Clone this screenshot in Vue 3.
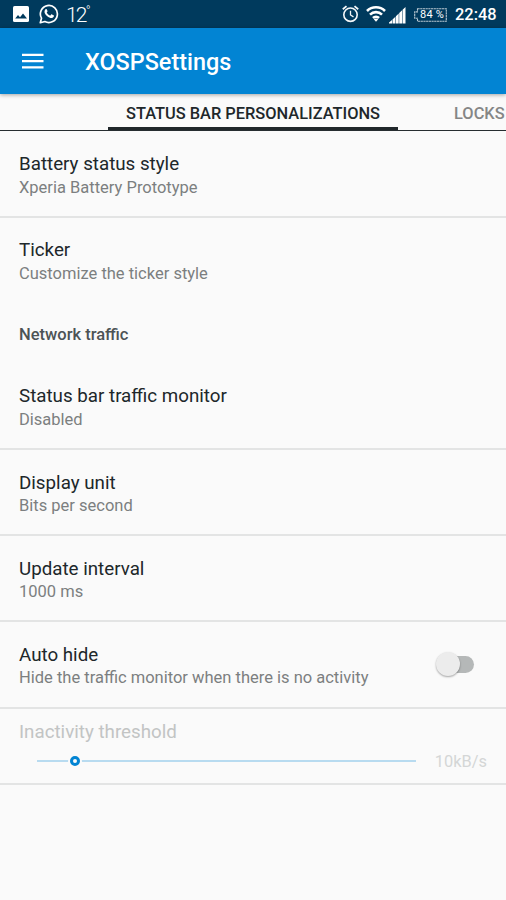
<script setup>
import { ref } from 'vue'

const beforeGroup = [
  { title: 'Battery status style', summary: 'Xperia Battery Prototype', size: 'first' },
  { title: 'Ticker', summary: 'Customize the ticker style', size: 'last' },
]
const group = [
  { title: 'Status bar traffic monitor', summary: 'Disabled', size: 'lead' },
  { title: 'Display unit', summary: 'Bits per second', size: 'regular' },
  { title: 'Update interval', summary: '1000 ms', size: 'regular' },
]
const autoHide = ref(false)
const threshold = ref(10)
</script>

<template>
  <div class="screen">
    <div class="status">
      <svg class="photo" width="16" height="16" viewBox="0 0 16 16">
        <rect width="16" height="16" rx="1.6" fill="#fff" />
        <path d="M2.2 12.5 5 9l2 2.2L10 7.4l4 5.1z" fill="#003a5d" />
      </svg>
      <svg class="chat" width="20" height="20" viewBox="0 0 20 20">
        <path d="M1.3 18.7 2.5 14.2A8.5 8.5 0 1 1 5.9 17.5z" fill="none" stroke="#fff" stroke-width="1.7" stroke-linejoin="round" />
        <path d="M6.2 5.5c.5-.6 1.3-.7 1.6 0l.7 1.6c.2.5-.5 1.1-.8 1.5.8 1.5 1.9 2.5 3.4 3.1l.9-1c.3-.4.6-.4 1-.2l1.6.8c.4.2.4.5.3 1-.4 1.5-2 2-3.4 1.7-3.1-.8-5.7-3.4-6-5.9-.1-1 .2-1.9.7-2.6z" fill="#fff" />
      </svg>
      <span class="temp">12<span class="degree">°</span></span>
      <span class="grow"></span>
      <svg class="alarm" width="17" height="18" viewBox="0 0 17 18" fill="none" stroke="#f4f7f9">
        <circle cx="8.5" cy="9.7" r="6.7" stroke-width="1.6" />
        <path d="M.8 4.2 4.5 1.1M12.5 1.1 16.2 4.2" stroke-width="1.8" />
        <path d="M8.5 5.8V10l3 1.9" stroke-width="1.3" />
      </svg>
      <svg class="wifi" width="20" height="16" viewBox="0 0 20 16" fill="none" stroke="#fff" stroke-width="2.6">
        <path d="M1 5a12.800 12.800 0 0 1 18 0M4 8.600a8.500 8.500 0 0 1 12 0M7 12a4.300 4.300 0 0 1 6 0" />
        <path d="M7.800 13.200Q10 11.700 12.200 13.200L10 15.700z" fill="#fff" stroke="none" />
      </svg>
      <svg class="signal" width="17" height="17" viewBox="0 0 17 17" fill="#fff">
        <path d="M0 16.500V15.600L3 12.900V16.500zM3.500 16.500V12.400L6.400 9.700V16.500zM6.900 16.500V9.200L9.700 6.500V16.500zM10.200 16.500V6L13.100 3.200V16.500zM13.600 16.500V2.700L16.500 0V16.500z" />
      </svg>
      <div class="battery">
        <svg width="33" height="14" viewBox="0 0 33 14" fill="none" stroke="#b9c8d1">
          <path d="M3.500 .7H32.300V13.300H3.500V10.200H.7V3.900H3.500z" stroke-width="1.100" stroke-dasharray="2.200 .5" />
        </svg>
        <span class="percent">84 %</span>
      </div>
      <span class="clock">22:48</span>
    </div>

    <header class="toolbar">
      <svg width="22" height="16" viewBox="0 0 22 16" fill="#fff">
        <path d="M0 .7H21.500V3H0zM0 7H21.500V9.300H0zM0 13.200H21.500V15.400H0z" />
      </svg>
      <h1>XOSPSettings</h1>
    </header>

    <nav class="tabs">
      <span class="tab active">STATUS BAR PERSONALIZATIONS</span>
      <span class="tab next">LOCKS</span>
    </nav>

    <main>
      <section v-for="item in beforeGroup" :key="item.title" class="row" :class="item.size">
        <div class="title">{{ item.title }}</div>
        <div class="summary">{{ item.summary }}</div>
      </section>
      <h2>Network traffic</h2>
      <section v-for="item in group" :key="item.title" class="row" :class="item.size">
        <div class="title">{{ item.title }}</div>
        <div class="summary">{{ item.summary }}</div>
      </section>
      <section class="row auto" @click="autoHide = !autoHide">
        <div>
          <div class="title">Auto hide</div>
          <div class="summary">Hide the traffic monitor when there is no activity</div>
        </div>
        <div class="switch" :class="{ on: autoHide }"><span class="knob"></span></div>
      </section>
      <section class="row threshold">
        <div class="title">Inactivity threshold</div>
        <div class="slider">
          <div class="track" :style="{ '--position': threshold + '%' }"><span class="thumb"></span></div>
          <span class="value">{{ threshold }}kB/s</span>
        </div>
      </section>
    </main>
  </div>
</template>

<style>
body {
  margin: 0;
  background: #fafafa;
}
</style>

<style scoped>
.screen {
  width: 506px;
  height: 900px;
  overflow: hidden;
  background: #fafafa;
  color: #20272a;
  font-family: Roboto, sans-serif;
  box-sizing: border-box;
}
.screen * {
  box-sizing: border-box;
}
.status {
  height: 28px;
  display: flex;
  align-items: center;
  padding: 0 9px 0 13px;
  background: #003a5d;
  color: #fff;
}
.status svg {
  display: block;
  flex: none;
}
.chat {
  margin-left: 10px;
}
.temp {
  margin-left: 7px;
  padding-top: 1px;
  display: flex;
  font-size: 21px;
  font-weight: 300;
  line-height: 28px;
  letter-spacing: -1.8px;
}
.degree {
  font-size: 13px;
  line-height: 20px;
  margin-left: 0;
}
.grow {
  flex: 1;
}
.wifi {
  margin-left: 7px;
}
.signal {
  margin-left: 3px;
  margin-top: 2px;
}
.battery {
  display: grid;
  margin-left: 8px;
  margin-top: 1px;
}
.battery > * {
  grid-area: 1 / 1;
}
.percent {
  padding-left: 3px;
  text-align: center;
  font-size: 11px;
  line-height: 14px;
  letter-spacing: 0.2px;
}
.clock {
  width: 42px;
  margin-left: 8px;
  padding-top: 1px;
  font-size: 16.4px;
  font-weight: 500;
  line-height: 28px;
  white-space: nowrap;
}
.toolbar {
  height: 66px;
  display: flex;
  align-items: center;
  gap: 41px;
  padding-left: 22px;
  background: #0284d3;
  color: #fff;
  box-shadow: 0 1px 4px rgba(0, 0, 0, 0.35);
  position: relative;
}
h1 {
  margin: 2px 0 0;
  font-size: 23.4px;
  font-weight: 500;
  line-height: 28px;
}
.tabs {
  height: 37px;
  display: flex;
  align-items: flex-start;
  padding-left: 108px;
  background: linear-gradient(#262d30, #262d30) 0 100% / 100% 1px no-repeat;
  white-space: nowrap;
}
.tab {
  flex: none;
  font-size: 16.4px;
  font-weight: 500;
  line-height: 20px;
}
.active {
  width: 290px;
  height: 36px;
  padding-top: 10px;
  border-bottom: 3px solid #20272a;
  text-align: center;
}
.next {
  padding: 10px 0 0 56px;
  color: #858686;
}
.row {
  height: 86px;
  padding: 21px 19px 0;
  border-bottom: 2px solid #e3e4e4;
}
.title {
  font-size: 18.75px;
  line-height: 24px;
}
.summary {
  font-size: 16.5px;
  line-height: 22px;
  color: #7c7f80;
}
.first {
  height: 87px;
}
.last {
  height: 66px;
  padding-top: 20px;
  border-bottom: 0;
}
.lead {
  padding-top: 20px;
}
.first .summary,
.last .summary,
.lead .summary {
  padding-top: 1px;
}
h2 {
  margin: 0;
  height: 80px;
  padding: 40px 19px 0;
  font-size: 16.5px;
  line-height: 22px;
  font-weight: 500;
  color: #4c5355;
}
.auto {
  height: 87px;
  display: flex;
  justify-content: space-between;
  padding-right: 32px;
}
.switch {
  width: 38px;
  height: 24px;
  margin-top: 9px;
  display: grid;
  align-items: center;
}
.switch::before {
  content: '';
  grid-area: 1 / 1;
  height: 17px;
  margin-left: 5px;
  border-radius: 9px;
  background: #b5b8b8;
}
.knob {
  grid-area: 1 / 1;
  width: 24px;
  height: 24px;
  border-radius: 50%;
  background: #ececec;
  box-shadow: 0 1px 2px rgba(0, 0, 0, 0.35);
}
.on .knob {
  justify-self: end;
  background: #0284d3;
}
.threshold {
  height: 76px;
  padding-top: 11px;
}
.threshold .title {
  color: #c2c4c4;
}
.slider {
  display: flex;
  align-items: flex-start;
  margin-top: 7px;
  padding-left: 18px;
  height: 22px;
}
.track {
  position: relative;
  width: 379px;
  height: 2px;
  margin-top: 9px;
  background: #b8dbf0;
}
.thumb {
  position: absolute;
  left: 33px;
  left: calc(var(--position) - 4.900px);
  top: -4px;
  width: 10px;
  height: 10px;
  border: 3px solid #0284d3;
  border-radius: 50%;
  background: #fafafa;
  box-shadow: 0 0 0 2px #fafafa;
}
.value {
  margin-left: 19px;
  font-size: 16.4px;
  line-height: 22px;
  color: #d4d6d6;
}
</style>
